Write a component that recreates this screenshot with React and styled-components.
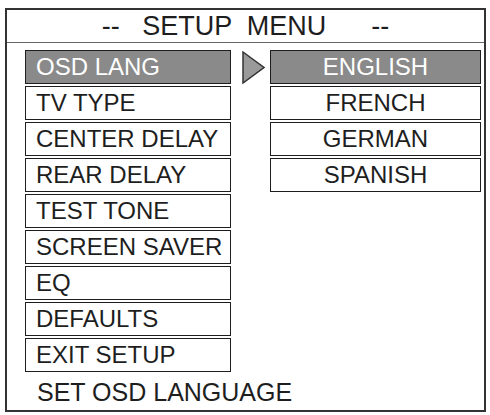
import styled, { createGlobalStyle } from "styled-components";

const GlobalStyle = createGlobalStyle`
  html, body {
    margin: 0;
    padding: 0;
    background: #fff;
  }
  body {
    font-family: "Liberation Sans", Arial, sans-serif;
    color: #1e1e1e;
  }
`;

const Frame = styled.div`
  margin: 8px 0 0 5px;
  width: 481px;
  height: 404px;
  box-sizing: border-box;
  border: 2px solid #333;
  display: flex;
  flex-direction: column;
`;

const Header = styled.div`
  height: 32px;
  border-bottom: 1px solid #666;
  font-size: 27px;
  line-height: 32px;
  text-align: center;
  white-space: pre;
`;

const Body = styled.div`
  display: grid;
  grid-template-columns: 206px 22px 206px;
  column-gap: 11px;
  padding: 7px 0 0 18px;
  align-items: start;
`;

const Column = styled.div`
  display: flex;
  flex-direction: column;
  gap: 2px;
`;

const Item = styled.div`
  height: 34px;
  box-sizing: border-box;
  border: 1px solid #1e1e1e;
  background: ${(props) => (props.$active ? "#8a8a8a" : "#fff")};
  color: ${(props) => (props.$active ? "#fff" : "#1e1e1e")};
  font-size: 24px;
  line-height: 32px;
  padding-left: ${(props) => (props.$center ? "0" : "10px")};
  text-align: ${(props) => (props.$center ? "center" : "left")};
  white-space: nowrap;
`;

const Pointer = styled.svg`
  display: block;
  margin-top: 1px;
  margin-right: -6px;
`;

const Options = styled(Column)`
  margin-left: -5px;
`;

const Hint = styled.div`
  font-size: 25px;
  line-height: 28px;
  padding: 6px 0 0 30px;
`;

const menu = [
  "OSD LANG",
  "TV TYPE",
  "CENTER DELAY",
  "REAR DELAY",
  "TEST TONE",
  "SCREEN SAVER",
  "EQ",
  "DEFAULTS",
  "EXIT SETUP",
];

const languages = ["ENGLISH", "FRENCH", "GERMAN", "SPANISH"];

const App = () => {
  return (
    <>
      <GlobalStyle />
      <Frame>
        <Header>{"--   SETUP  MENU      --"}</Header>
        <Body>
          <Column>
            {menu.map((label, i) => (
              <Item key={label} $active={i === 0}>
                {label}
              </Item>
            ))}
          </Column>
          <Pointer width="23" height="33" viewBox="0 0 23 33">
            <polygon
              points="1,1 22,16.5 1,32"
              fill="#9a9a9a"
              stroke="#333"
              strokeWidth="1.5"
              strokeLinejoin="miter"
            />
          </Pointer>
          <Options>
            {languages.map((label, i) => (
              <Item key={label} $active={i === 0} $center>
                {label}
              </Item>
            ))}
          </Options>
        </Body>
        <Hint>SET OSD LANGUAGE</Hint>
      </Frame>
    </>
  );
};

export default App;
